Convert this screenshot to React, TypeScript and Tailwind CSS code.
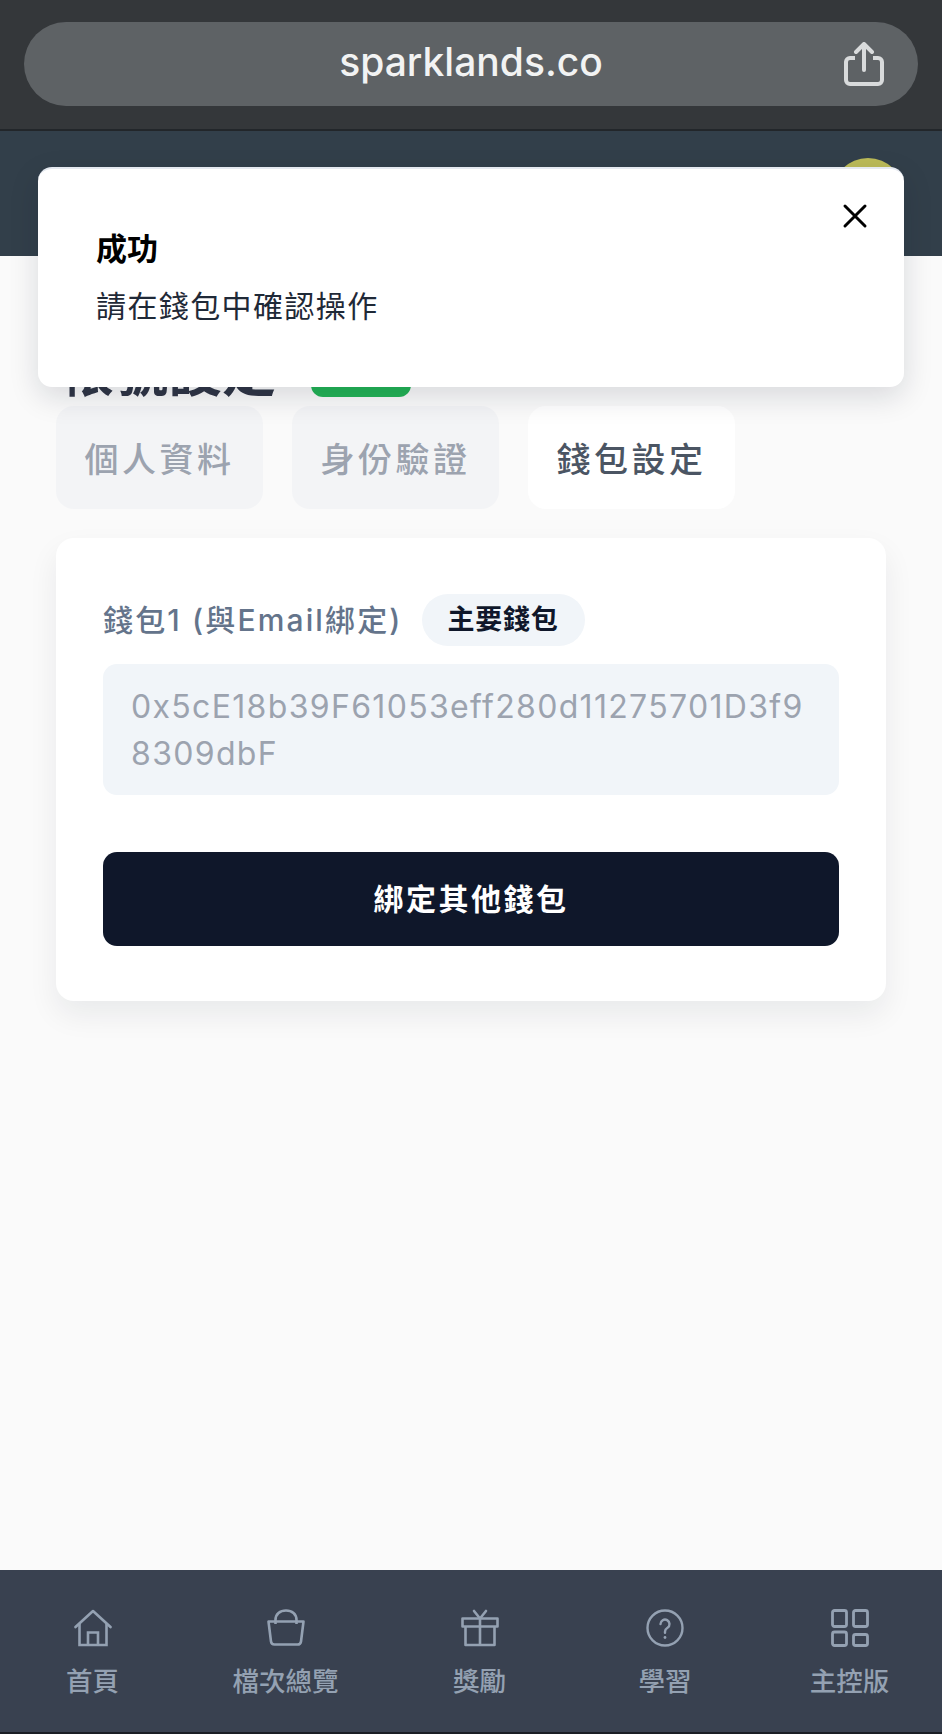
import React from "react"

const fontStack = "font-['Inter','Noto_Sans_CJK_TC',sans-serif]"

const HomeIcon = () => (
  <svg width="38" height="38" viewBox="0 0 38 38" fill="none" stroke="currentColor" strokeWidth="2.6">
    <path d="M1.500 18 19 2l17.500 16" strokeLinejoin="round" strokeLinecap="round" />
    <path d="M5.500 14.500V36h27V14.500" />
    <path d="M14 36V23.500h10V36" />
  </svg>
)

const BagIcon = () => (
  <svg width="38" height="38" viewBox="0 0 38 38" fill="none" stroke="currentColor" strokeWidth="2.6">
    <path d="M1.500 12.500h35l-2.500 20a3.500 3.500 0 0 1-3.500 3h-23a3.500 3.500 0 0 1-3.500-3l-2.500-20Z" strokeLinejoin="round" />
    <path d="M8.500 15V11C8.500 5 13 1.500 19 1.500S29.500 5 29.500 11v4" />
  </svg>
)

const GiftIcon = () => (
  <svg width="38" height="38" viewBox="0 0 38 38" fill="none" stroke="currentColor" strokeWidth="2.6">
    <path d="M1.500 9.500h35v8h-35zM4.500 17.500V36h29V17.500M19 9.500V36" strokeLinejoin="round" />
    <path d="M13 2l6 7.500L25 2" strokeLinecap="round" />
  </svg>
)

const HelpIcon = () => (
  <svg width="38" height="38" viewBox="0 0 38 38" fill="none" stroke="currentColor" strokeWidth="2.4">
    <circle cx="19" cy="19" r="17.500" />
    <path d="M14.500 15a4.500 4.500 0 1 1 7 3.800c-1.600 1-2.500 2-2.500 4v1" strokeLinecap="round" />
    <circle cx="19" cy="28.500" r="1.400" fill="currentColor" stroke="none" />
  </svg>
)

const GridIcon = () => (
  <svg width="38" height="38" viewBox="0 0 38 38" fill="none" stroke="currentColor" strokeWidth="2.800">
    <rect x="1.500" y="1.500" width="14" height="16" rx="2" />
    <rect x="22.500" y="1.500" width="14" height="16" rx="2" />
    <rect x="1.500" y="23" width="14" height="13.500" rx="2" />
    <rect x="22.500" y="25.500" width="14" height="11" rx="2" />
  </svg>
)

const navItems = [
  { label: "首頁", icon: <HomeIcon />, className: "w-[185px]" },
  { label: "檔次總覽", icon: <BagIcon />, className: "w-[201px]" },
  { label: "獎勵", icon: <GiftIcon />, className: "w-[187px]" },
  { label: "學習", icon: <HelpIcon />, className: "w-[184px]" },
  { label: "主控版", icon: <GridIcon />, className: "w-[185px]" },
]

const tabs = [
  { label: "個人資料", active: false },
  { label: "身份驗證", active: false },
  { label: "錢包設定", active: true },
]

export default function App() {
  return (
    <div className={`relative flex h-[1734px] w-[942px] flex-col overflow-hidden bg-[#fafafa] ${fontStack}`}>
      {/* browser bar */}
      <div className="flex h-[131px] shrink-0 items-start border-b-2 border-[#22262a] bg-[#34373a] px-[24px] pt-[22px]">
        <div className="relative flex h-[84px] w-full items-center justify-center rounded-full bg-[#5e6265] pb-[4px]">
          <span className="text-[39px] font-medium text-[#f2f3f3]">sparklands.co</span>
          <svg className="absolute right-[33px] top-[20px] text-[#d9dbdc]" width="42" height="44" viewBox="0 0 42 44" fill="none" stroke="currentColor" strokeWidth="4">
            <path d="M12 16H7a4 4 0 0 0-4 4v18a4 4 0 0 0 4 4h28a4 4 0 0 0 4-4V20a4 4 0 0 0-4-4h-5" />
            <path d="M21 28V3M13 10l8-8 8 8" strokeLinecap="round" strokeLinejoin="round" />
          </svg>
        </div>
      </div>

      {/* site header */}
      <div className="flex h-[125px] shrink-0 items-start justify-end bg-[#323f4a] pr-[38px] pt-[27px]">
        <div className="h-[72px] w-[72px] rounded-full bg-[#bcbb58]" />
      </div>

      {/* page */}
      <div className="flex flex-1 flex-col px-[56px]">
        <div className="flex h-[150px] items-end gap-[35px] pb-[3px] pl-[4px]">
          <h1 className="text-[54px] font-bold leading-[60px] text-[#2f3545]">帳號設定</h1>
          <span className="mb-[6px] h-[40px] w-[100px] rounded-[12px] bg-[#22b455]" />
        </div>

        <div className="flex gap-[29px]">
          {tabs.map((tab) => (
            <div
              key={tab.label}
              className={`flex h-[103px] w-[207px] items-center justify-center rounded-[18px] pt-[4px] text-[34px] font-medium tracking-[3.5px] ${
                tab.active ? "bg-white text-[#4b5563]" : "bg-[#f3f4f6] text-[#9ca3af]"
              }`}
            >
              {tab.label}
            </div>
          ))}
        </div>

        <div className="mt-[29px] flex h-[463px] flex-col rounded-[18px] bg-white px-[47px] pt-[56px] shadow-[0_14px_30px_rgba(15,23,42,0.07)]">
          <div className="flex h-[52px] items-center gap-[19px]">
            <span className="text-[30px] font-medium tracking-[2.15px] text-[#64748b]">錢包1 (與Email綁定)</span>
            <span className="flex h-[52px] w-[163px] items-center justify-center rounded-full bg-[#f1f5f9] text-[27px] font-bold tracking-[0.8px] text-[#0f172a]">主要錢包</span>
          </div>
          <div className="mt-[18px] h-[131px] rounded-[14px] bg-[#f1f5f9] px-[28px] pt-[19px] text-[32px] leading-[47px] tracking-[1.33px] break-all text-[#9ca3af]">
            0x5cE18b39F61053eff280d11275701D3f98309dbF
          </div>
          <button className="mt-[57px] flex h-[94px] items-center justify-center rounded-[14px] bg-[#0f172a] text-[30px] font-semibold tracking-[2.5px] text-white">
            綁定其他錢包
          </button>
        </div>
      </div>

      {/* bottom nav */}
      <div className="flex h-[164px] shrink-0 items-start border-b-2 border-[#1a1d24] bg-[#394150] pt-[39px] text-[#94a1b2]">
        {navItems.map((item) => (
          <div key={item.label} className={`flex flex-col items-center gap-[19px] ${item.className}`}>
            {item.icon}
            <span className="text-[26.5px] font-medium leading-[30px]">{item.label}</span>
          </div>
        ))}
      </div>

      {/* toast */}
      <div className="absolute left-[38px] top-[167px] h-[220px] w-[866px] rounded-[14px] border-t-2 border-[#e5e9f0] bg-white px-[58px] pt-[62px] shadow-[0_10px_30px_rgba(15,23,42,0.14)]">
        <div className="text-[31px] leading-[36px] font-bold text-black">成功</div>
        <div className="mt-[21px] text-[30px] leading-[36px] tracking-[1.4px] text-[#1f2937]">請在錢包中確認操作</div>
        <svg className="absolute right-[36px] top-[34px] text-black" width="26" height="26" viewBox="0 0 26 26" fill="none" stroke="currentColor" strokeWidth="3" strokeLinecap="round">
          <path d="M3 3l20 20M23 3 3 23" />
        </svg>
      </div>
    </div>
  )
}
